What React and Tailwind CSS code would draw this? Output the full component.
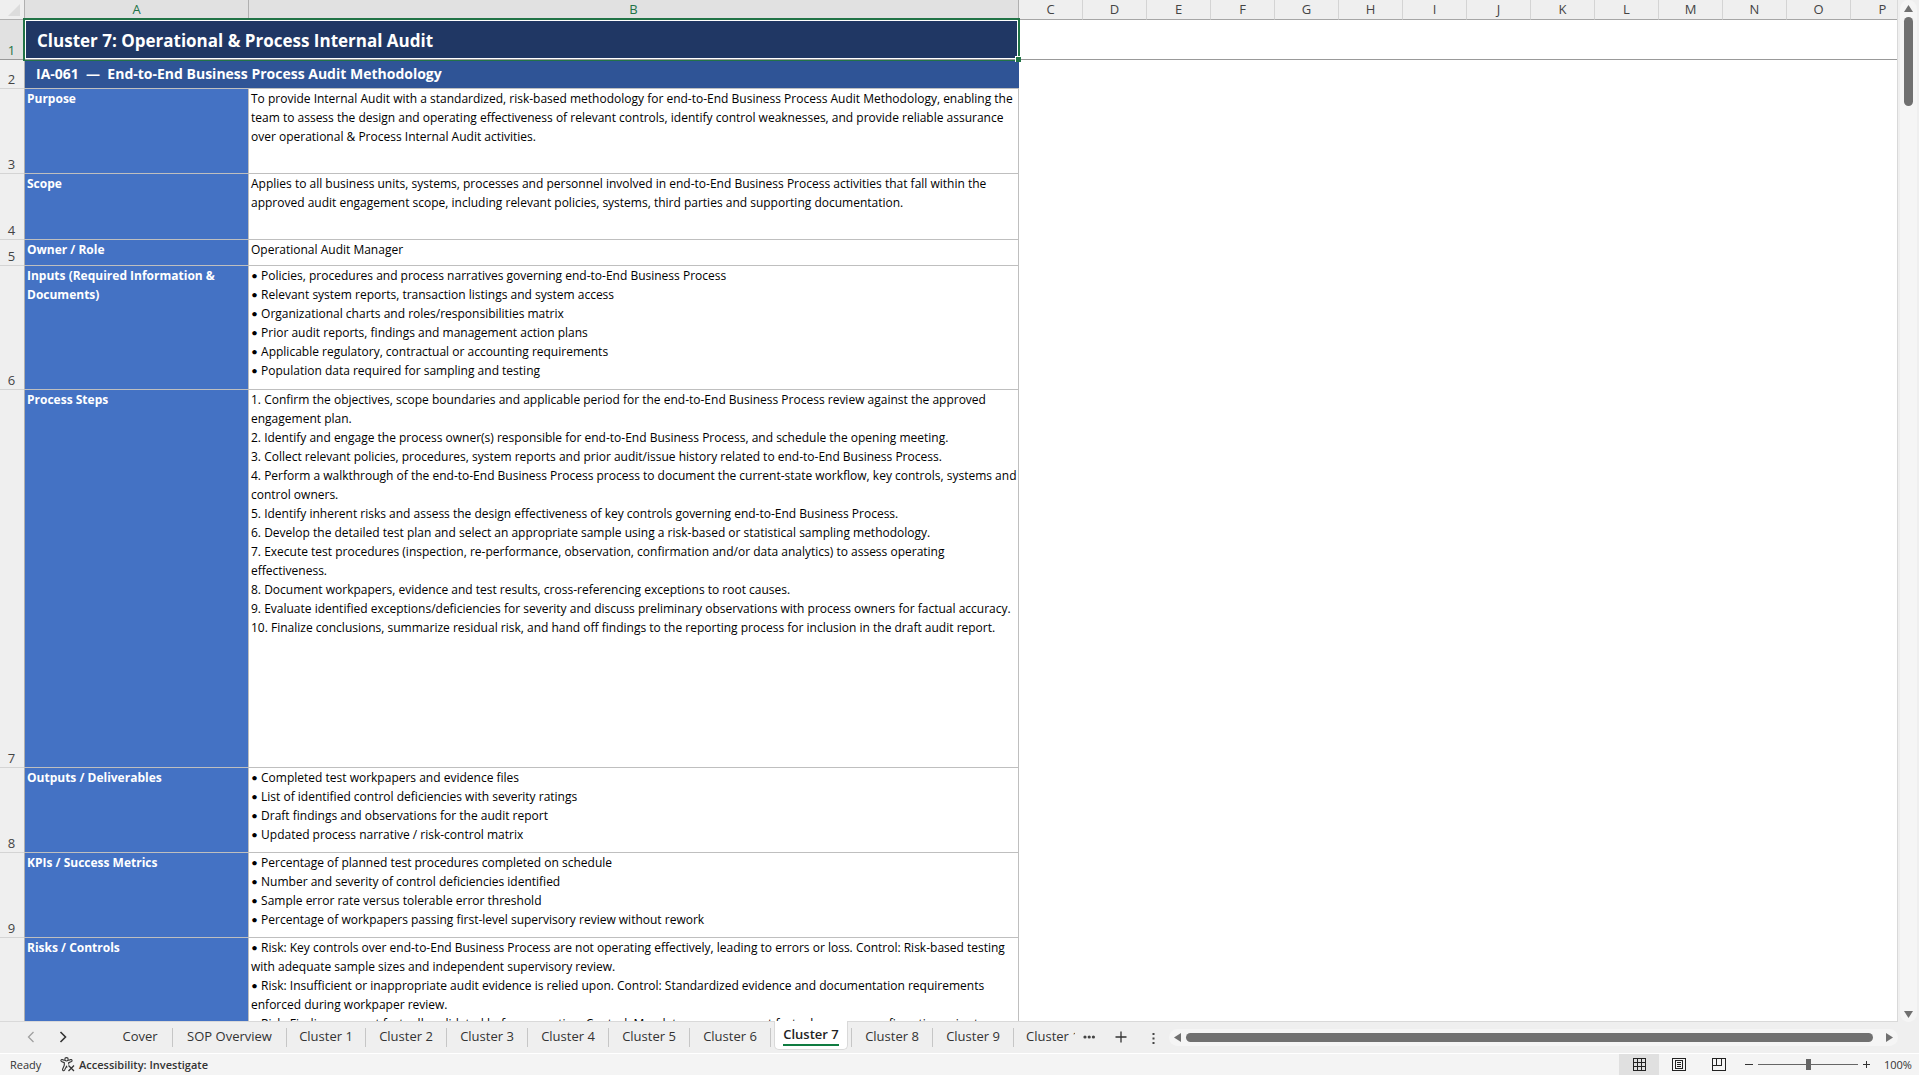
const columns = ["C", "D", "E", "F", "G", "H", "I", "J", "K", "L", "M", "N", "O", "P"];

const rows = [
  {
    height: "h-[85px]",
    label: "Purpose",
    lines: [
      "To provide Internal Audit with a standardized, risk-based methodology for end-to-End Business Process Audit Methodology, enabling the",
      "team to assess the design and operating effectiveness of relevant controls, identify control weaknesses, and provide reliable assurance",
      "over operational & Process Internal Audit activities.",
    ],
  },
  {
    height: "h-[66px]",
    label: "Scope",
    lines: [
      "Applies to all business units, systems, processes and personnel involved in end-to-End Business Process activities that fall within the",
      "approved audit engagement scope, including relevant policies, systems, third parties and supporting documentation.",
    ],
  },
  { height: "h-[26px]", label: "Owner / Role", lines: ["Operational Audit Manager"] },
  {
    height: "h-[124px]",
    label: "Inputs (Required Information & Documents)",
    bullets: true,
    lines: [
      "Policies, procedures and process narratives governing end-to-End Business Process",
      "Relevant system reports, transaction listings and system access",
      "Organizational charts and roles/responsibilities matrix",
      "Prior audit reports, findings and management action plans",
      "Applicable regulatory, contractual or accounting requirements",
      "Population data required for sampling and testing",
    ],
  },
  {
    height: "h-[378px]",
    label: "Process Steps",
    lines: [
      "1. Confirm the objectives, scope boundaries and applicable period for the end-to-End Business Process review against the approved",
      "engagement plan.",
      "2. Identify and engage the process owner(s) responsible for end-to-End Business Process, and schedule the opening meeting.",
      "3. Collect relevant policies, procedures, system reports and prior audit/issue history related to end-to-End Business Process.",
      "4. Perform a walkthrough of the end-to-End Business Process process to document the current-state workflow, key controls, systems and",
      "control owners.",
      "5. Identify inherent risks and assess the design effectiveness of key controls governing end-to-End Business Process.",
      "6. Develop the detailed test plan and select an appropriate sample using a risk-based or statistical sampling methodology.",
      "7. Execute test procedures (inspection, re-performance, observation, confirmation and/or data analytics) to assess operating",
      "effectiveness.",
      "8. Document workpapers, evidence and test results, cross-referencing exceptions to root causes.",
      "9. Evaluate identified exceptions/deficiencies for severity and discuss preliminary observations with process owners for factual accuracy.",
      "10. Finalize conclusions, summarize residual risk, and hand off findings to the reporting process for inclusion in the draft audit report.",
    ],
  },
  {
    height: "h-[85px]",
    label: "Outputs / Deliverables",
    bullets: true,
    lines: [
      "Completed test workpapers and evidence files",
      "List of identified control deficiencies with severity ratings",
      "Draft findings and observations for the audit report",
      "Updated process narrative / risk-control matrix",
    ],
  },
  {
    height: "h-[85px]",
    label: "KPIs / Success Metrics",
    bullets: true,
    lines: [
      "Percentage of planned test procedures completed on schedule",
      "Number and severity of control deficiencies identified",
      "Sample error rate versus tolerable error threshold",
      "Percentage of workpapers passing first-level supervisory review without rework",
    ],
  },
  {
    height: "h-[124px]",
    label: "Risks / Controls",
    bullets: true,
    lines: [
      "Risk: Key controls over end-to-End Business Process are not operating effectively, leading to errors or loss. Control: Risk-based testing\nwith adequate sample sizes and independent supervisory review.",
      "Risk: Insufficient or inappropriate audit evidence is relied upon. Control: Standardized evidence and documentation requirements\nenforced during workpaper review.",
      "Risk: Findings are not factually validated before reporting. Control: Mandatory management factual accuracy confirmation prior to",
    ],
  },
];

const tabs = [
  { name: "Cover", width: "w-[65px]" },
  { name: "SOP Overview", width: "w-[114px]" },
  { name: "Cluster 1", width: "w-[79px]" },
  { name: "Cluster 2", width: "w-[81px]" },
  { name: "Cluster 3", width: "w-[81px]" },
  { name: "Cluster 4", width: "w-[81px]" },
  { name: "Cluster 5", width: "w-[81px]" },
  { name: "Cluster 6", width: "w-[81px]" },
  { name: "Cluster 7", width: "w-[81px]", active: true },
  { name: "Cluster 8", width: "w-[81px]" },
  { name: "Cluster 9", width: "w-[81px]" },
];

const RowNumber = ({ children, active }) =>
  active ? (
    <th className="p-0 pr-px text-[13px] leading-[18px] font-normal text-[#217346] align-bottom bg-[#e1e1e1] border-b border-b-[#999] border-r border-r-[#b0b0b0]">
      {children}
    </th>
  ) : (
    <th className="p-0 pr-px text-[13px] leading-[18px] font-normal text-[#444] align-bottom bg-[#efefef] border-b border-b-[#d4d4d4] border-r border-r-[#b0b0b0]">
      {children}
    </th>
  );

const Sheet = () => (
  <table className="table-fixed w-[1915px] border-separate border-spacing-0 text-xs leading-[19px]">
    <colgroup>
      <col className="w-[25px]" />
      <col className="w-[224px]" />
      <col className="w-[770px]" />
      {columns.map((c) => (
        <col key={c} className="w-16" />
      ))}
    </colgroup>
    <thead className="text-[13px] leading-[19px] text-[#444]">
      <tr className="h-5">
        <th className="p-0 bg-[#efefef] border-b border-r border-[#b0b0b0]">
          <svg width="12" height="12" className="ml-2 block" aria-hidden="true">
            <path d="M12 0V12H0Z" fill="#dcdcdc" />
          </svg>
        </th>
        <th className="p-0 font-normal text-[#217346] bg-[#e1e1e1] border-b border-r border-[#b0b0b0]">A</th>
        <th className="p-0 font-normal text-[#217346] bg-[#e1e1e1] border-b border-r border-[#b0b0b0]">B</th>
        {columns.map((c) => (
          <th key={c} className="p-0 font-normal bg-[#efefef] border-b border-b-[#a6a6a6] border-r border-r-[#d4d4d4]">
            {c}
          </th>
        ))}
      </tr>
    </thead>
    <tbody>
      <tr className="h-10">
        <RowNumber active>1</RowNumber>
        <td colSpan={2} className="relative p-0 pl-3 text-[17px] font-bold text-white bg-[#203764]">
          Cluster 7: Operational &amp; Process Internal Audit
          {/* selection frame with fill handle */}
          <span className="absolute -left-0.5 -right-px -top-0.5 -bottom-px border-2 border-[#217346]" />
          <span className="absolute left-0 right-px top-0 bottom-px border border-white" />
          <span className="absolute inset-x-0 bottom-0 h-px bg-[#999]" />
          <span className="absolute -right-0.5 -bottom-0.5 size-1.5 border-l border-t border-white bg-[#217346]" />
        </td>
        <td colSpan={14} className="p-0 border-b border-[#999]" />
      </tr>
      <tr className="h-[29px]">
        <RowNumber>2</RowNumber>
        <td colSpan={2} className="p-0 pl-[11px] text-sm font-bold text-white bg-[#2f5496] border-b border-[#bfbfbf] whitespace-pre">
          {"IA-061  —  End-to-End Business Process Audit Methodology"}
        </td>
      </tr>
      {rows.map((row, i) => (
        <tr key={row.label} className={row.height}>
          <RowNumber>{i + 3}</RowNumber>
          <th className="p-0 pl-0.5 pr-4 text-left align-top font-bold text-white bg-[#4472c4] border-b border-r border-[#bfbfbf]">
            {row.label}
          </th>
          <td className="p-0 pl-0.5 align-top text-black border-b border-r border-[#bfbfbf] whitespace-pre">
            {row.lines.map((line) => (
              <div key={line}>
                {row.bullets && <span className="font-['Lato',sans-serif] leading-4">• </span>}
                {line}
              </div>
            ))}
          </td>
        </tr>
      ))}
    </tbody>
  </table>
);

const VerticalScroll = () => (
  <div className="w-[22px] shrink-0 border-l border-[#d9d9d9] bg-[#efefef] pl-0.5 pr-0.5">
    <div className="flex h-full flex-col items-center justify-between rounded-full bg-[#f5f5f5] pt-[5px] pb-1">
      <div className="flex flex-col items-center gap-[5px]">
        <svg width="9" height="7" aria-hidden="true">
          <path d="M4.5 0L9 7H0Z" fill="#707070" />
        </svg>
        <div className="h-[89px] w-[9px] rounded-full bg-[#707070]" />
      </div>
      <svg width="9" height="7" aria-hidden="true">
        <path d="M4.5 7L9 0H0Z" fill="#707070" />
      </svg>
    </div>
  </div>
);

const SheetTabs = () => (
  <nav className="flex h-[31px] shrink-0 items-center bg-[#efefef] text-[13px] leading-[17px] text-[#333]">
    <div className="flex w-[108px] shrink-0 items-center gap-6 pb-0.5 pl-[27px]">
      <button aria-label="Previous sheets" className="text-[#a0a0a0]">
        <svg width="8" height="12" fill="none" stroke="currentColor" strokeWidth="1.3">
          <path d="M6.5 1L1.5 6L6.5 11" />
        </svg>
      </button>
      <button aria-label="Next sheets">
        <svg width="8" height="12" fill="none" stroke="currentColor" strokeWidth="1.6">
          <path d="M1.5 1L6.5 6L1.5 11" />
        </svg>
      </button>
    </div>
    {tabs.map(({ name, width, active }) =>
      active ? (
        <div key={name} className={`${width} relative h-[19px] shrink-0 border-r border-[#c6c6c6]`}>
          <button className="absolute -top-[7px] left-[3px] flex h-[29px] w-[74px] justify-center rounded-b-[5px] border border-t-0 border-[#d9d9d9] bg-white pt-[5px] font-semibold text-[#222]">
            <span className="h-5 border-b-2 border-[#107c41]">{name}</span>
          </button>
        </div>
      ) : (
        <button key={name} className={`${width} h-[19px] shrink-0 border-r border-[#c6c6c6] pb-0.5 whitespace-nowrap`}>
          {name}
        </button>
      )
    )}
    <button className="w-[61px] shrink-0 overflow-hidden whitespace-nowrap pb-0.5 pl-3 text-left">Cluster 10</button>
    <button aria-label="More sheets" className="ml-2 shrink-0 pb-0.5">
      <svg width="12" height="4" fill="#444">
        <circle cx="2" cy="2" r="1.6" />
        <circle cx="6.2" cy="2" r="1.6" />
        <circle cx="10.4" cy="2" r="1.6" />
      </svg>
    </button>
    <button aria-label="New sheet" className="ml-5 shrink-0 pb-0.5">
      <svg width="12" height="12" stroke="#333" strokeWidth="1.3">
        <path d="M6 0.5V11.5M0.5 6H11.5" />
      </svg>
    </button>
    <svg width="3" height="12" className="ml-[25px] shrink-0" fill="#444" aria-hidden="true">
      <rect x="0.5" y="1" width="2" height="2" />
      <rect x="0.5" y="5.5" width="2" height="2" />
      <rect x="0.5" y="10" width="2" height="2" />
    </svg>
    <div className="ml-3.5 mr-[21px] flex h-[17px] flex-1 items-center rounded-full bg-[#f5f5f5] px-[5px]">
      <svg width="7" height="9" aria-hidden="true">
        <path d="M7 0V9L0 4.5Z" fill="#707070" />
      </svg>
      <div className="ml-[5px] mr-[13px] h-[9px] flex-1 rounded-full bg-[#707070]" />
      <svg width="7" height="9" aria-hidden="true">
        <path d="M0 0V9L7 4.5Z" fill="#707070" />
      </svg>
    </div>
  </nav>
);

const StatusBar = () => (
  <footer className="flex h-[22px] shrink-0 items-center border-t border-white bg-[#f4f4f4] text-[11px] leading-4 text-[#333]">
    <span className="ml-2.5 w-[50px]">Ready</span>
    <button className="flex items-center gap-1 font-semibold">
      <svg width="15" height="15" fill="none" stroke="#333" strokeWidth="1.1">
        <circle cx="6.5" cy="2.3" r="1.7" />
        <path d="M4.7 3.6L2.3 2.6C1 2.2 0.4 3.8 1.5 4.4L4.3 5.7V8.2L2.6 12.3C2.2 13.7 3.9 14.4 4.6 13.1L6.5 9.3L7.2 10.5" />
        <path d="M8.3 3.6L10.7 2.6C12 2.2 12.6 3.8 11.5 4.4L8.7 5.7V7.6" />
        <path d="M8.5 8.5L14 14M14 8.5L8.5 14" strokeWidth="1.3" />
      </svg>
      Accessibility: Investigate
    </button>
    <div className="ml-auto flex h-full">
      <button aria-label="Normal view" className="flex w-10 items-center justify-center bg-[#e0e0e0]">
        <svg width="13" height="13" fill="none" stroke="#222" shapeRendering="crispEdges">
          <path d="M0.5 0.5H12.5V12.5H0.5ZM4.5 0.5V12.5M8.5 0.5V12.5M0.5 4.5H12.5M0.5 8.5H12.5" />
        </svg>
      </button>
      <button aria-label="Page layout view" className="flex w-10 items-center justify-center">
        <svg width="14" height="13" fill="none" stroke="#222" shapeRendering="crispEdges">
          <path d="M0.5 0.5H13.5V12.5H0.5ZM3.5 2.5H10.5V10.5H3.5ZM5 4.5H9M5 6.5H9M5 8.5H9" />
        </svg>
      </button>
      <button aria-label="Page break preview" className="flex w-10 items-center justify-center">
        <svg width="14" height="13" fill="none" stroke="#222" shapeRendering="crispEdges">
          <path d="M0.5 0.5H13.5V12.5H0.5ZM4.5 0.5V7.5M9.5 0.5V7.5M0.5 7.5H9.5" />
        </svg>
      </button>
    </div>
    <button aria-label="Zoom out" className="ml-1.5">
      <svg width="8" height="8" stroke="#333" shapeRendering="crispEdges">
        <path d="M0 3.5H8" />
      </svg>
    </button>
    <input
      type="range"
      aria-label="Zoom"
      min="0"
      max="200"
      defaultValue="100"
      className="mx-[5px] h-3 w-[100px] appearance-none bg-transparent [&::-webkit-slider-runnable-track]:h-px [&::-webkit-slider-runnable-track]:bg-[#666] [&::-webkit-slider-thumb]:-mt-[5px] [&::-webkit-slider-thumb]:h-[11px] [&::-webkit-slider-thumb]:w-[5px] [&::-webkit-slider-thumb]:appearance-none [&::-webkit-slider-thumb]:bg-[#666]"
    />
    <button aria-label="Zoom in">
      <svg width="7" height="8" stroke="#333" shapeRendering="crispEdges">
        <path d="M0 3.5H7M3.5 0V7" />
      </svg>
    </button>
    <span className="ml-3.5 mr-2 w-[27px]">100%</span>
  </footer>
);

const App = () => (
  <div className="flex h-screen flex-col overflow-hidden bg-[#efefef] font-['Open_Sans',sans-serif]">
    <main className="flex min-h-0 flex-1">
      <div className="min-w-0 flex-1 overflow-hidden border-b border-[#d9d9d9] bg-white">
        <Sheet />
      </div>
      <VerticalScroll />
    </main>
    <SheetTabs />
    <StatusBar />
  </div>
);

export default App;
